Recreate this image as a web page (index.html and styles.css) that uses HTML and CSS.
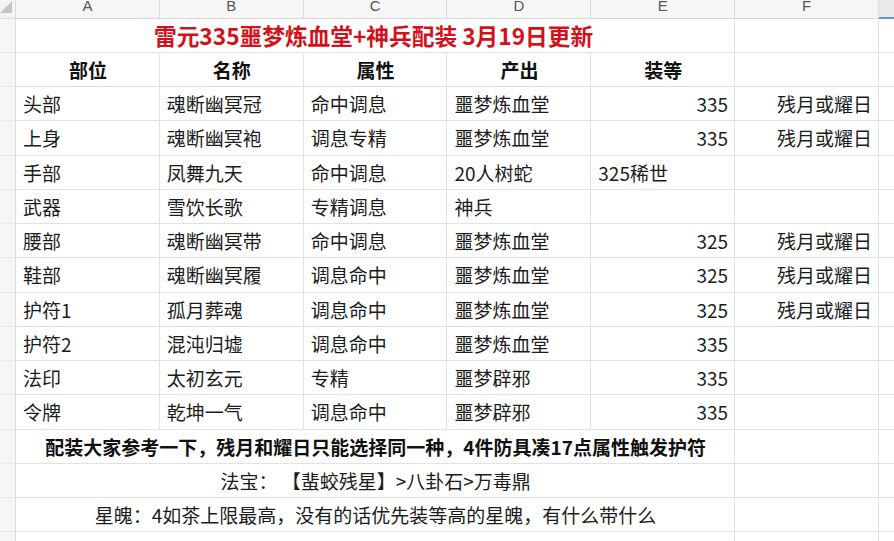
FILE: index.html
```html
<!DOCTYPE html>
<html lang="zh-CN">
<head>
<meta charset="utf-8">
<link rel="stylesheet" href="styles.css">
</head>
<body>
<div class="sheet">
  <div class="corner"><svg width="16" height="18" viewBox="0 0 16 18"><polygon points="0,13 12,13 12,1" fill="#c4c4c4"/></svg></div>
  <div class="colh">A</div><div class="colh">B</div><div class="colh">C</div><div class="colh">D</div><div class="colh">E</div><div class="colh">F</div><div class="colh sel"></div>

  <div class="rowh"></div><div class="c span5 title">雷元335噩梦炼血堂+神兵配装 3月19日更新</div><div class="c"></div><div class="c g"></div>

  <div class="rowh"></div><div class="c ctr b">部位</div><div class="c ctr b">名称</div><div class="c ctr b">属性</div><div class="c ctr b">产出</div><div class="c ctr b">装等</div><div class="c"></div><div class="c g"></div>

  <div class="rowh"></div><div class="c">头部</div><div class="c">魂断幽冥冠</div><div class="c">命中调息</div><div class="c">噩梦炼血堂</div><div class="c r">335</div><div class="c r">残月或耀日</div><div class="c g"></div>
  <div class="rowh"></div><div class="c">上身</div><div class="c">魂断幽冥袍</div><div class="c">调息专精</div><div class="c">噩梦炼血堂</div><div class="c r">335</div><div class="c r">残月或耀日</div><div class="c g"></div>
  <div class="rowh"></div><div class="c">手部</div><div class="c">凤舞九天</div><div class="c">命中调息</div><div class="c">20人树蛇</div><div class="c">325稀世</div><div class="c"></div><div class="c g"></div>
  <div class="rowh"></div><div class="c">武器</div><div class="c">雪饮长歌</div><div class="c">专精调息</div><div class="c">神兵</div><div class="c"></div><div class="c"></div><div class="c g"></div>
  <div class="rowh"></div><div class="c">腰部</div><div class="c">魂断幽冥带</div><div class="c">命中调息</div><div class="c">噩梦炼血堂</div><div class="c r">325</div><div class="c r">残月或耀日</div><div class="c g"></div>
  <div class="rowh"></div><div class="c">鞋部</div><div class="c">魂断幽冥履</div><div class="c">调息命中</div><div class="c">噩梦炼血堂</div><div class="c r">325</div><div class="c r">残月或耀日</div><div class="c g"></div>
  <div class="rowh"></div><div class="c">护符1</div><div class="c">孤月葬魂</div><div class="c">调息命中</div><div class="c">噩梦炼血堂</div><div class="c r">325</div><div class="c r">残月或耀日</div><div class="c g"></div>
  <div class="rowh"></div><div class="c">护符2</div><div class="c">混沌归墟</div><div class="c">调息命中</div><div class="c">噩梦炼血堂</div><div class="c r">335</div><div class="c"></div><div class="c g"></div>
  <div class="rowh"></div><div class="c">法印</div><div class="c">太初玄元</div><div class="c">专精</div><div class="c">噩梦辟邪</div><div class="c r">335</div><div class="c"></div><div class="c g"></div>
  <div class="rowh"></div><div class="c">令牌</div><div class="c">乾坤一气</div><div class="c">调息命中</div><div class="c">噩梦辟邪</div><div class="c r">335</div><div class="c"></div><div class="c g"></div>

  <div class="rowh"></div><div class="c span5 ctr b">配装大家参考一下，残月和耀日只能选择同一种，4件防具凑17点属性触发护符</div><div class="c"></div><div class="c g"></div>
  <div class="rowh"></div><div class="c span5 ctr">法宝： 【蜚蛟残星】&gt;八卦石&gt;万毒鼎</div><div class="c"></div><div class="c g"></div>
  <div class="rowh"></div><div class="c span5 ctr">星魄：4如茶上限最高，没有的话优先装等高的星魄，有什么带什么</div><div class="c"></div><div class="c g"></div>
  <div class="rowh"></div><div class="c span5"></div><div class="c"></div><div class="c g"></div>
</div>
</body>
</html>
```

FILE: styles.css
```css
html, body {
  margin: 0;
  padding: 0;
  background: #ffffff;
  overflow: hidden;
}
body {
  width: 894px;
  height: 541px;
  font-family: "Noto Sans CJK SC", "Noto Sans", sans-serif;
  color: #1c1c1c;
}
.sheet {
  display: grid;
  grid-template-columns: 16px repeat(6, 143.83px) 15px;
  grid-template-rows: 18.5px repeat(16, 34.25px);
}
.corner {
  background: #f3f3f3;
  border-right: 1px solid #dcdcdc;
  border-bottom: 1px solid #dcdcdc;
  box-sizing: border-box;
  overflow: hidden;
}
.corner svg { display: block; }
.colh {
  background: #f6f6f6;
  border-right: 1px solid #dedede;
  border-bottom: 1px solid #d8d8d8;
  box-sizing: border-box;
  color: #555;
  font-family: "Liberation Sans", "Noto Sans", sans-serif;
  font-size: 15px;
  line-height: 11px;
  text-align: center;
  overflow: hidden;
}
.colh.sel {
  background: #e9e9e9;
  border-bottom: 2px solid #6b95d6;
  border-right: none;
}
.rowh {
  background: #f6f6f6;
  border-right: 1px solid #dcdcdc;
  border-bottom: 1px solid #e6e6e6;
  box-sizing: border-box;
}
.c {
  border-right: 1px solid #e2e2e2;
  border-bottom: 1px solid #e2e2e2;
  box-sizing: border-box;
  font-size: 19px;
  line-height: 33px;
  padding: 0 6px 0 7px;
  white-space: nowrap;
  overflow: visible;
}
.c.g { border-right: none; padding: 0; }
.span5 { grid-column: span 5; }
.ctr { text-align: center; }
.r { text-align: right; }
.b { font-weight: bold; color: #111; }
.title {
  text-align: center;
  color: #d4111b;
  font-weight: bold;
  font-size: 22.7px;
  padding-right: 10px;
}
```
